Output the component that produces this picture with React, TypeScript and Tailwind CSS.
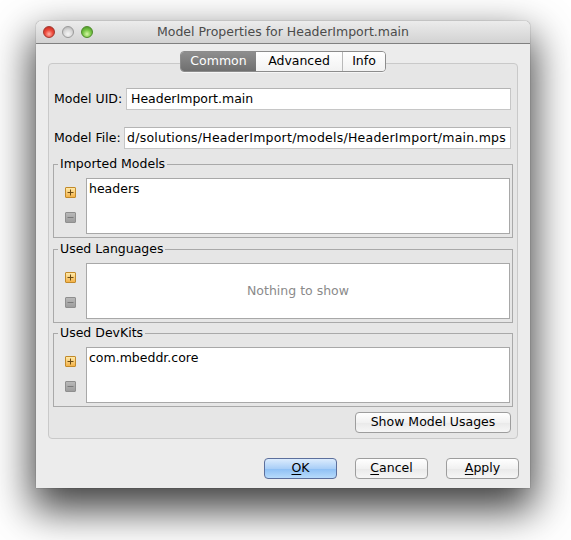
import React from "react";

function Light({ tone }: { tone: "red" | "gray" | "green" }) {
  const cls =
    tone === "red"
      ? "border-[#a3382f] bg-[radial-gradient(circle_at_50%_70%,#ffb3a8_0%,#ee4a3c_45%,#b9241a_100%)]"
      : tone === "green"
        ? "border-[#4f8b2b] bg-[radial-gradient(circle_at_50%_70%,#d8f7a6_0%,#7cc94a_45%,#3f8a1d_100%)]"
        : "border-[#9a9a9a] bg-[radial-gradient(circle_at_50%_70%,#f6f6f6_0%,#d8d8d8_50%,#a9a9a9_100%)]";
  return <span className={`block h-[12px] w-[12px] rounded-full border ${cls}`} />;
}

function PlusIcon() {
  return (
    <span className="flex h-[11px] w-[11px] items-center justify-center rounded-[1px] border border-[#c28a2a] bg-[linear-gradient(#ffe9a8,#f3b24a)]">
      <svg width="9" height="9" viewBox="0 0 9 9">
        <path d="M4.5 1.5v6M1.5 4.5h6" stroke="#6b4a12" strokeWidth="1" />
      </svg>
    </span>
  );
}

function MinusIcon() {
  return (
    <span className="flex h-[11px] w-[11px] items-center justify-center rounded-[1px] border border-[#8f8f8f] bg-[linear-gradient(#b8b8b8,#9d9d9d)]">
      <svg width="9" height="9" viewBox="0 0 9 9">
        <path d="M1.5 4.5h6" stroke="#7a7a7a" strokeWidth="1" />
      </svg>
    </span>
  );
}

function Group({ title, children }: { title: string; children?: React.ReactNode }) {
  return (
    <fieldset className="ml-[-1px] mr-[-2px] border border-[#a9a9a9]">
      <legend className="ml-[4px] px-[2px] leading-[16px] text-black">{title}</legend>
      <div className="flex pb-[3px] pl-[11px] pr-[2px] pt-[6px]">
        <div className="flex w-[21px] flex-col pt-[9px]">
          <PlusIcon />
          <div className="mt-[14px]">
            <MinusIcon />
          </div>
        </div>
        <div className="flex h-[56px] flex-1 flex-col border border-[#a8a8a8] bg-white">
          {children}
        </div>
      </div>
    </fieldset>
  );
}

function DialogButton({ mnemonic, rest, primary }: { mnemonic: string; rest: string; primary?: boolean }) {
  return (
    <button
      className={`flex h-[21px] w-[73px] items-center justify-center rounded-[4px] border text-black ${
        primary
          ? "border-[#5c6f9c] bg-[linear-gradient(#dcecfd,#aacff7_50%,#8dbff4_51%,#b7dbfb)]"
          : "border-[#9d9d9d] bg-[linear-gradient(#ffffff,#f1f1f1_50%,#e9e9e9_51%,#f6f6f6)]"
      }`}
    >
      <span className="underline underline-offset-[2px]">{mnemonic}</span>
      {rest}
    </button>
  );
}

export default function App() {
  return (
    <div className="min-h-[540px] w-[571px] bg-white pl-[36px] pt-[21px] font-['DejaVu_Sans',sans-serif] text-[12.5px]">
      <div className="flex h-[467px] w-[494px] flex-col rounded-t-[5px] bg-[#ececec] shadow-[0_18px_40px_4px_rgba(0,0,0,0.75),0_0_1px_rgba(0,0,0,0.7)]">
        {/* title bar */}
        <div className="relative flex h-[23px] items-center justify-center rounded-t-[5px] border-b border-[#7f7f7f] bg-[linear-gradient(#ececec,#d2d2d2)]">
          <div className="absolute left-[7px] top-[5px] flex gap-[7px]">
            <Light tone="red" />
            <Light tone="gray" />
            <Light tone="green" />
          </div>
          <span className="text-[#4b4b4b]">Model Properties for HeaderImport.main</span>
        </div>

        <div className="flex flex-col pl-[12px] pr-[12px]">
          {/* tabs */}
          <div className="relative z-10 mt-[7px] flex h-[21px] justify-center">
            <div className="flex overflow-hidden rounded-[4px] border border-[#8c8c8c] shadow-[0_1px_0_rgba(255,255,255,0.6)]">
              <div className="flex w-[75px] items-center justify-center bg-[linear-gradient(#8e8e8e,#6f6f6f)] text-white">
                Common
              </div>
              <div className="flex w-[87px] items-center justify-center border-r border-[#b9b9b9] bg-[linear-gradient(#ffffff,#f2f2f2)] text-black">
                Advanced
              </div>
              <div className="flex w-[42px] items-center justify-center bg-[linear-gradient(#ffffff,#f2f2f2)] text-black">
                Info
              </div>
            </div>
          </div>

          {/* panel */}
          <div className="-mt-[9px] flex h-[376px] flex-col rounded-[4px] border border-[#c9c9c9] bg-[#e6e6e6] pl-[5px] pr-[6px] pt-[24px]">
            <div className="flex items-center">
              <span className="w-[72px] text-black">Model UID:</span>
              <div className="flex h-[22px] flex-1 items-center border border-[#c6c6c6] border-t-[#b4b4b4] bg-white pl-[4px] text-black">
                HeaderImport.main
              </div>
            </div>
            <div className="mt-[17px] flex items-center">
              <span className="w-[70px] text-black">Model File:</span>
              <div className="flex h-[22px] flex-1 items-center justify-end overflow-hidden whitespace-nowrap border border-[#c6c6c6] border-t-[#b4b4b4] bg-white pr-[4px] text-black">
                <span className="tracking-[0.24px]">d/solutions/HeaderImport/models/HeaderImport/main.mps</span>
              </div>
            </div>

            <div className="mt-[7px]">
              <Group title="Imported Models">
                <div className="pl-[2px] pt-[1px] text-black">headers</div>
              </Group>
            </div>
            <div className="mt-[3px]">
              <Group title="Used Languages">
                <div className="flex flex-1 items-center justify-center text-[#8a8a8a]">Nothing to show</div>
              </Group>
            </div>
            <div className="mt-[2px]">
              <Group title="Used DevKits">
                <div className="pl-[2px] pt-[1px] text-black">com.mbeddr.core</div>
              </Group>
            </div>

            <div className="mt-[5px] flex justify-end">
              <button className="flex h-[21px] w-[156px] items-center justify-center rounded-[4px] border border-[#9d9d9d] bg-[linear-gradient(#ffffff,#f1f1f1_50%,#e9e9e9_51%,#f6f6f6)] text-black">
                Show Model Usages
              </button>
            </div>
          </div>
        </div>

        {/* dialog buttons */}
        <div className="mt-[19px] flex justify-end gap-[18px] pr-[11px]">
          <DialogButton mnemonic="O" rest="K" primary />
          <DialogButton mnemonic="C" rest="ancel" />
          <DialogButton mnemonic="A" rest="pply" />
        </div>
      </div>
    </div>
  );
}
